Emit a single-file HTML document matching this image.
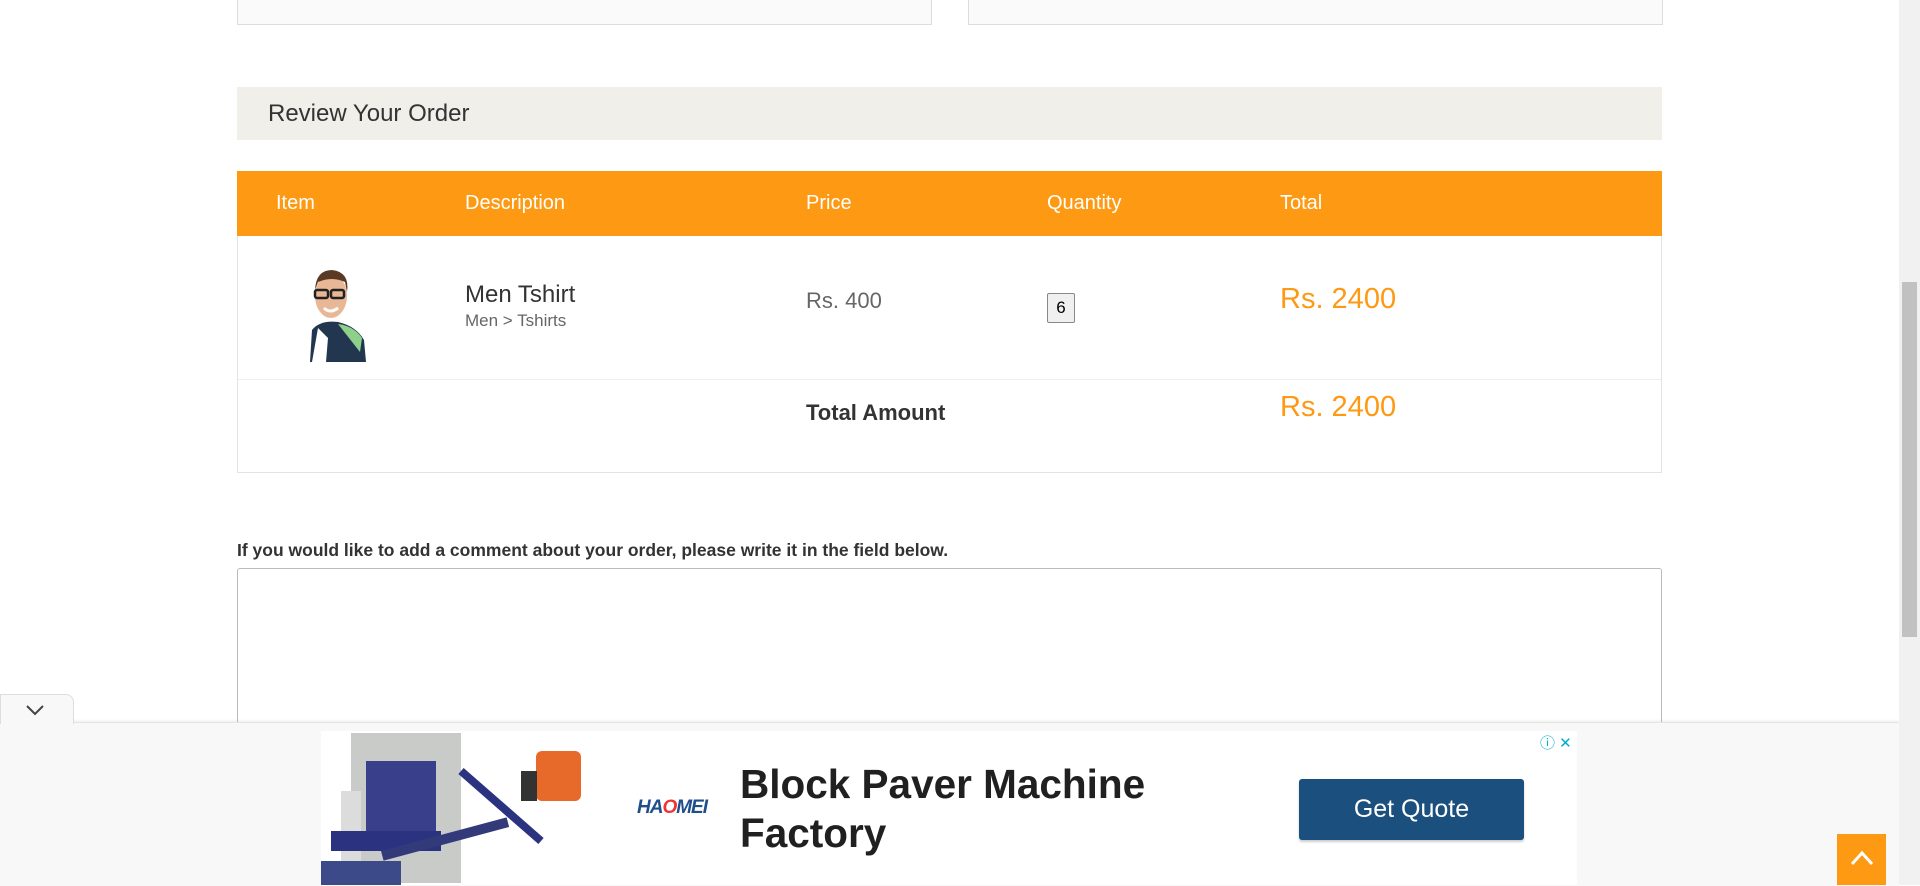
<!DOCTYPE html>
<html><head><meta charset="utf-8"><style>
body{margin:0;width:1920px;height:885px;overflow:hidden;background:#fff;font-family:"Liberation Sans",Arial,sans-serif;position:relative}
.a{position:absolute}
.box{border:1px solid #ddd;border-top:none;background:#fafafa}
</style></head><body>
<div class="a box" style="left:237px;top:-2px;width:693px;height:26px"></div>
<div class="a box" style="left:968px;top:-2px;width:693px;height:26px"></div>

<div class="a" style="left:237px;top:87px;width:1425px;height:53px;background:#f0efe9"></div>
<div class="a" style="left:268px;top:100px;font-size:24px;color:#333">Review Your Order</div>

<div class="a" style="left:237px;top:171px;width:1423px;height:301px;border:1px solid #e3e3e3;border-top:none"></div>
<div class="a" style="left:237px;top:171px;width:1425px;height:65px;background:#fd9912"></div>
<div class="a" style="top:192px;left:276px;color:#fff;font-size:20px">Item</div>
<div class="a" style="top:192px;left:465px;color:#fff;font-size:20px">Description</div>
<div class="a" style="top:192px;left:806px;color:#fff;font-size:20px">Price</div>
<div class="a" style="top:192px;left:1047px;color:#fff;font-size:20px">Quantity</div>
<div class="a" style="top:192px;left:1280px;color:#fff;font-size:20px">Total</div>

<svg class="a" style="left:298px;top:260px" width="70" height="102" viewBox="0 0 70 102">
<path d="M14 70 Q22 60 40 62 Q58 66 66 80 L68 102 L12 102 Z" fill="#223650"/>
<path d="M40 64 Q56 66 64 78 L62 92 Z" fill="#8cd08a"/>
<path d="M20 68 L30 78 L28 102 L14 102 Z" fill="#fff"/>
<ellipse cx="33" cy="36" rx="16" ry="22" fill="#e8b896"/>
<path d="M17 30 Q18 10 34 10 Q52 12 49 32 L47 22 Q34 16 20 22 Z" fill="#5a3a25"/>
<rect x="17" y="30" width="13" height="8" rx="2" fill="none" stroke="#222" stroke-width="2.5"/>
<rect x="33" y="30" width="13" height="8" rx="2" fill="none" stroke="#222" stroke-width="2.5"/>
<path d="M26 48 Q32 54 40 48" stroke="#fff" stroke-width="3" fill="none"/>
</svg>

<div class="a" style="left:465px;top:281px;font-size:24px;color:#333">Men Tshirt</div>
<div class="a" style="left:465px;top:311px;font-size:17px;color:#666">Men &gt; Tshirts</div>
<div class="a" style="left:806px;top:288px;font-size:22px;color:#666">Rs. 400</div>
<div class="a" style="left:1047px;top:293px;width:26px;height:28px;border:1px solid #888;background:#f0f0f0;border-radius:2px;font-size:17px;text-align:center;line-height:28px;color:#000">6</div>
<div class="a" style="left:1280px;top:283px;font-size:29px;color:#fd9912">Rs. 2400</div>
<div class="a" style="left:238px;top:379px;width:1423px;height:1px;background:#eee"></div>
<div class="a" style="left:806px;top:400px;font-size:22px;font-weight:bold;color:#333">Total Amount</div>
<div class="a" style="left:1280px;top:391px;font-size:29px;color:#fd9912">Rs. 2400</div>

<div class="a" style="left:237px;top:540px;font-size:17.5px;font-weight:bold;color:#333">If you would like to add a comment about your order, please write it in the field below.</div>
<div class="a" style="left:237px;top:568px;width:1423px;height:200px;border:1px solid #bbb;border-radius:3px"></div>

<div class="a" style="left:0;top:722px;width:1899px;height:163px;background:#f8f8f8;border-top:1px solid #e5e5e5;box-shadow:0 -1px 3px rgba(0,0,0,.08)"></div>
<div class="a" style="left:0;top:694px;width:72px;height:29px;background:#f8f8f8;border:1px solid #ddd;border-bottom:none;border-radius:0 8px 0 0"></div>
<svg class="a" style="left:25px;top:703px" width="20" height="14"><path d="M2 3 L10 11 L18 3" stroke="#444" stroke-width="2" fill="none"/></svg>
<div class="a" style="left:321px;top:731px;width:1256px;height:154px;background:#fff"></div>
<svg class="a" style="left:321px;top:731px" width="300" height="154" viewBox="0 0 300 154">
<rect x="30" y="2" width="110" height="150" fill="#c8cbc8"/>
<rect x="45" y="30" width="70" height="90" fill="#3a3f8c"/>
<rect x="20" y="60" width="20" height="90" fill="#dcdcdc"/>
<rect x="10" y="100" width="110" height="20" fill="#2b3280"/>
<rect x="0" y="130" width="80" height="24" fill="#3c4a8a"/>
<rect x="60" y="120" width="130" height="10" fill="#333a7a" transform="rotate(-15 60 120)"/>
<rect x="215" y="20" width="45" height="50" rx="6" fill="#e86a2a"/>
<rect x="200" y="40" width="16" height="30" fill="#333"/>
<path d="M140 40 L220 110" stroke="#2b3280" stroke-width="8"/>
</svg>
<div class="a" style="left:637px;top:797px;font-size:19px;font-weight:bold;color:#1e4e8c;font-style:italic;letter-spacing:-1px">HA<span style="color:#e33">O</span>MEI</div>
<div class="a" style="left:740px;top:760px;font-size:40.5px;font-weight:bold;color:#202020;line-height:49px">Block Paver Machine<br>Factory</div>
<div class="a" style="left:1299px;top:779px;width:225px;height:61px;background:#1b4f7d;border-radius:3px;box-shadow:0 2px 2px rgba(0,0,0,.2);color:#fff;font-size:25px;text-align:center;line-height:61px">Get Quote</div>
<div class="a" style="left:1540px;top:732px;font-size:15px;color:#00aecd">ⓘ ✕</div>
<div class="a" style="left:1837px;top:834px;width:49px;height:51px;background:#fd9912"></div>
<svg class="a" style="left:1849px;top:848px" width="26" height="20"><path d="M3 16 L13 5 L23 16" stroke="#fff" stroke-width="3" fill="none"/></svg>

<div class="a" style="left:1899px;top:0;width:21px;height:885px;background:#f1f1f1"></div>
<div class="a" style="left:1902px;top:282px;width:15px;height:355px;background:#c1c1c1"></div>
</body></html>
